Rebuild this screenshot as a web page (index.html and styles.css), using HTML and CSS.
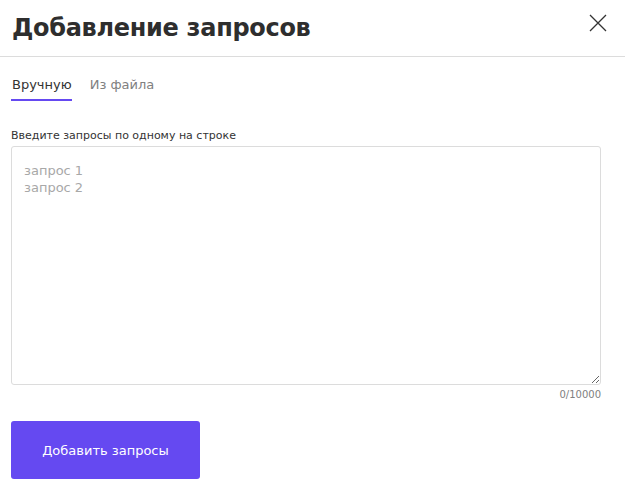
FILE: index.html
```html
<!DOCTYPE html>
<html lang="ru">
<head>
  <meta charset="UTF-8">
  <meta name="viewport" content="width=device-width, initial-scale=1">
  <link rel="stylesheet" href="styles.css">
</head>
<body>

  <div class="modal">
    <div class="modal-header">
      <h1 class="modal-title">Добавление запросов</h1>
      <button class="close" aria-label="Закрыть">
        <svg width="18" height="18" viewBox="0 0 18 18">
          <path d="M1 1L17 17M17 1L1 17" stroke="#333" stroke-width="1.3" fill="none"/>
        </svg>
      </button>
    </div>

    <div class="modal-body">
      <div class="tabs">
        <span class="tab active">Вручную</span>
        <span class="tab">Из файла</span>
      </div>

      <label class="field-label" for="queries">Введите запросы по одному на строке</label>
      <textarea id="queries" class="queries" placeholder="запрос 1&#10;запрос 2"></textarea>
      <div class="counter">0/10000</div>

      <button class="submit">Добавить запросы</button>
    </div>
  </div>

</body>
</html>
```

FILE: styles.css
```css
body {
  font-family: 'DejaVu Sans', sans-serif;
  background-color: #fff;
  color: #333;
  margin: 0;
}

.modal-header {
  display: flex;
  align-items: center;
  justify-content: space-between;
  height: 56px;
  padding: 0 18px 0 12px;
  border-bottom: 1px solid #dcdcdc;
}

.modal-title {
  margin: 0;
  font-size: 24px;
  font-weight: 700;
  color: #2e2e2e;
  letter-spacing: -0.3px;
}

.close {
  background: none;
  border: none;
  padding: 0;
  cursor: pointer;
  display: flex;
  margin-top: -10px;
}

.modal-body {
  padding: 20px 24px 0 11px;
}

.tabs {
  display: flex;
  gap: 17px;
  height: 24px;
}

.tab {
  font-size: 13px;
  color: #808080;
  padding: 0 0 0 1px;
  cursor: pointer;
}

.tab.active {
  color: #333;
  border-bottom: 2px solid #6549f1;
}

.field-label {
  display: block;
  margin-top: 28px;
  font-size: 11px;
  color: #333;
}

.queries {
  display: block;
  box-sizing: border-box;
  width: 590px;
  height: 239px;
  margin-top: 4px;
  padding: 15px 12px;
  border: 1px solid #dcdcdc;
  border-radius: 3px;
  font-family: inherit;
  font-size: 13px;
  line-height: 17px;
  color: #333;
}

.queries::placeholder {
  color: #a8a8a8;
}

.counter {
  width: 590px;
  text-align: right;
  font-size: 10px;
  color: #808080;
  margin-top: 4px;
}

.submit {
  margin-top: 21px;
  width: 189px;
  height: 58px;
  border: none;
  border-radius: 3px;
  background-color: #6549f1;
  color: #fff;
  font-family: inherit;
  font-size: 13px;
  cursor: pointer;
}
```
